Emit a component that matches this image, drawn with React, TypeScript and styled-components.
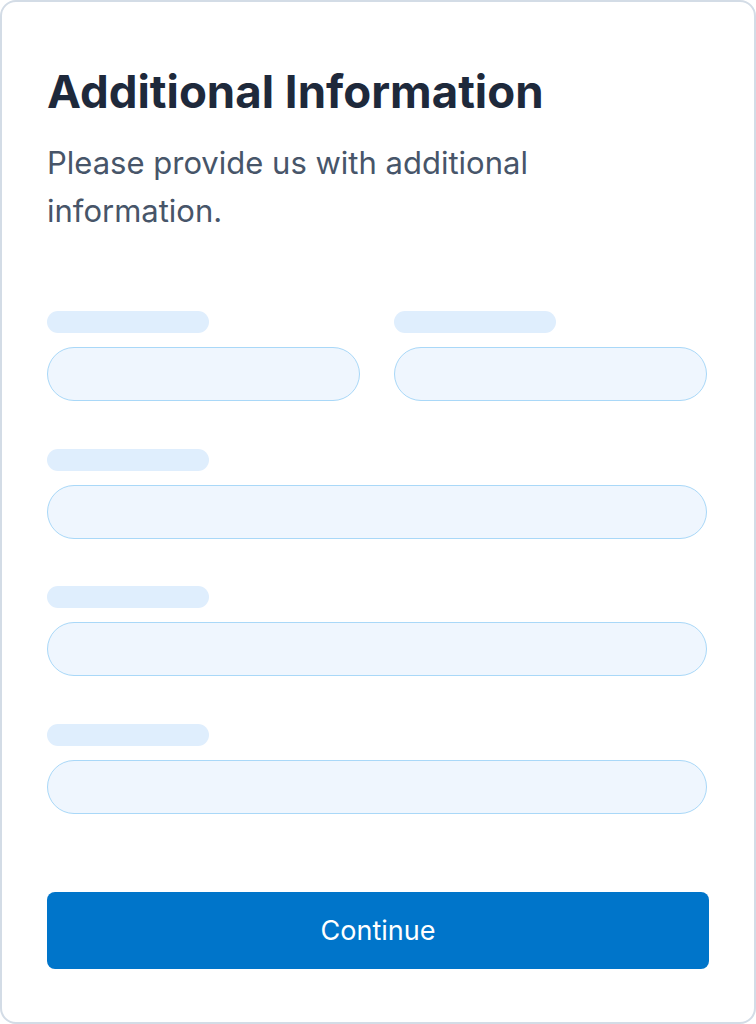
import React from 'react';
import styled, { createGlobalStyle } from 'styled-components';

const Global = createGlobalStyle`
    html, body {
        margin: 0;
        padding: 0;
        background: #ffffff;
    }
    * {
        box-sizing: border-box;
    }
`;

const App: React.FC = () => {
    return (
        <S.Page>
            <Global />
            <S.Card>
                <S.Title>Additional Information</S.Title>
                <S.Subtitle>Please provide us with additional information.</S.Subtitle>

                <S.Form>
                    <S.Row>
                        <S.Field>
                            <S.Label />
                            <S.Input />
                        </S.Field>
                        <S.Field>
                            <S.Label />
                            <S.Input />
                        </S.Field>
                    </S.Row>
                    <S.Field>
                        <S.Label />
                        <S.Input />
                    </S.Field>
                    <S.Field>
                        <S.Label />
                        <S.Input />
                    </S.Field>
                    <S.Field>
                        <S.Label />
                        <S.Input />
                    </S.Field>
                </S.Form>

                <S.Button>Continue</S.Button>
            </S.Card>
        </S.Page>
    );
};

const S = {
    Page: styled.div`
        width: 756px;
        height: 1024px;
        font-family: Inter, "Noto Sans", sans-serif;
    `,
    Card: styled.div`
        display: flex;
        flex-direction: column;
        width: 756px;
        height: 1024px;
        padding: 61px 47px 0 45px;
        border: 2px solid #d3dce6;
        border-radius: 16px;
        background: #ffffff;
    `,
    Title: styled.h1`
        margin: 0;
        font-size: 45.6px;
        line-height: 58px;
        font-weight: 700;
        color: #1e293b;
    `,
    Subtitle: styled.p`
        max-width: 520px;
        margin: 18px 0 0 0;
        font-size: 31px;
        line-height: 48px;
        font-weight: 400;
        color: #475569;
    `,
    Form: styled.div`
        display: flex;
        flex-direction: column;
        gap: 47.6px;
        margin-top: 76px;
    `,
    Row: styled.div`
        display: grid;
        grid-template-columns: 1fr 1fr;
        column-gap: 34px;
    `,
    Field: styled.div`
        display: flex;
        flex-direction: column;
        gap: 14px;
    `,
    Label: styled.div`
        width: 162px;
        height: 22px;
        border-radius: 11px;
        background: #dfeefd;
    `,
    Input: styled.div`
        height: 54px;
        border: 1.5px solid #a9d8f8;
        border-radius: 27px;
        background: #eff6fe;
    `,
    Button: styled.button`
        display: flex;
        align-items: center;
        justify-content: center;
        height: 77px;
        margin-top: 78px;
        margin-right: -2px;
        border: none;
        border-radius: 8px;
        background: #0075ca;
        color: #ffffff;
        font-family: Inter, "Noto Sans", sans-serif;
        font-size: 27px;
        font-weight: 400;
    `,
};

export default App;
